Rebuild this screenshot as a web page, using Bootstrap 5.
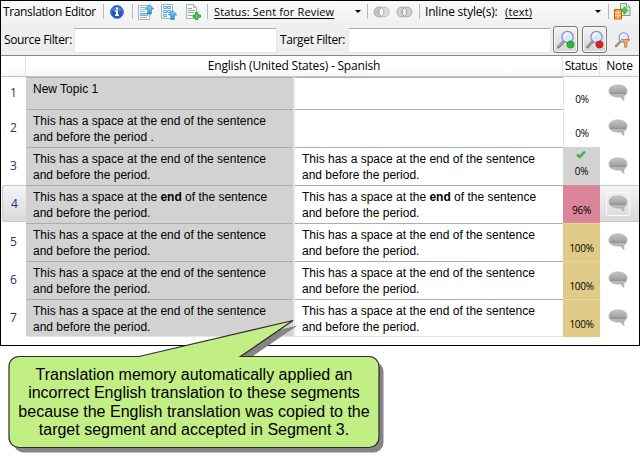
<!DOCTYPE html>
<html lang="en">
<head>
<meta charset="utf-8">
<meta name="viewport" content="width=device-width, initial-scale=1">
<title>Translation Editor</title>
<link rel="stylesheet" href="https://cdn.jsdelivr.net/npm/bootstrap@5.3.0/dist/css/bootstrap.min.css">
<style>
body{width:640px;height:463px;overflow:hidden;background:#fff;color:#000;font:12px/16px "Open Sans","Noto Sans",sans-serif}
svg{display:block;flex:none}
.editor{height:346px;border:1px solid #000}
.tools{height:54px;background:linear-gradient(#fafafa,#eeeeee 55%,#efefef);flex:none}
.bar-a{height:21px;margin-bottom:2px;padding-left:2px;grid-template-columns:100px 7px 22px 6px 23px 25px 21px 7px 141px 12px 6px 23px 23px 6px 80px 90px 13px 6px 20px}
.bar-b{height:31px;padding-left:3px;grid-template-columns:70px 206px 68px 205px 29px 32px 20px}
.ui{letter-spacing:-.36px;white-space:nowrap}
.wide{letter-spacing:-.2px}
.sep{width:1px;height:15px;background:#b9b9b9}
.drop{font-size:11px;letter-spacing:.14px;text-decoration:underline;text-underline-offset:2px;white-space:nowrap;padding-top:1px}
.caret{width:0;height:0;border:3px solid transparent;border-top-color:#000;border-bottom:0}
.field{width:203px;height:25px;margin-top:1px;background:#fff;border:1px solid #e2e6ee;border-top-color:#abadb3}
.tool-btn{width:25px;height:27px;border:1px solid #777;border-radius:3px;background:linear-gradient(#f3f3f3,#d6d6d6);box-shadow:inset 0 0 0 1px #fafafa}
.line{display:grid;grid-template-columns:25px 267px 2px 268px 37px 39px;height:38px}
.line.first{height:32px}
.heads{height:22px;flex:none;border-top:1px solid #8a8590;background:linear-gradient(#fff 60%,#f5f6f8);border-bottom:1px solid #c6c6c8;grid-template-columns:25px 537px 37px 39px}
.heads>div{border-right:1px solid #e0e2e6;padding-top:2px}
.heads>div:last-child{border:0}
.num{color:#1c2f7c;font-size:12px}
.txt{font:12px/16px "Liberation Sans",Arial,sans-serif;padding:3px 0 0 7px;border-top:1px solid #a9adb6;white-space:nowrap}
.line:last-child .txt{border-bottom:1px solid #e2e5ec}
.src{background:#d2d2d2}
.mid{background:#e3e5ef}
.stat{font-size:10px;line-height:12px;letter-spacing:-.3px;padding-top:18px;border-left:1px solid #e2e5ec}
.first .stat{padding-top:16px}
.s-done,.s-fuzzy,.s-full{border-left:0}
.s-done{background:#d3d3d3}.s-fuzzy{background:#dc849a;padding-top:19px}.s-full{background:#dfcb87;border-top:1px solid #e7d7a0;padding-top:18px}
.note{padding-right:3px}
.picked{height:37px;background:linear-gradient(#f4f4f4,#dadada);border-top:1px solid #c8c8c8;border-bottom:1px solid #c8c8c8}
.num.picked{margin-left:1px;border-left:1px solid #c8c8c8;border-radius:3px 0 0 3px}
.note-box{width:24px;height:24px;border:1px solid #f8f8f8;border-radius:2px}
.callout{left:0;top:310px;width:400px;height:153px}
.callout p{font:16px/18.3px "Liberation Sans",Arial,sans-serif;white-space:nowrap;padding:56px 0 0 9px;width:379px;position:relative}
.tick{left:13px;top:3px}
</style>
<script src="https://cdn.jsdelivr.net/npm/bootstrap@5.3.0/dist/js/bootstrap.bundle.min.js"></script>
</head>
<body class="position-relative">
<svg width="0" height="0" class="position-absolute">
 <defs>
  <linearGradient id="bubbleFill" x2="0" y2="1"><stop stop-color="#c6c6c6"/><stop offset=".45" stop-color="#a3a3a3"/><stop offset=".55" stop-color="#949494"/><stop offset=".58" stop-color="#b9b9b9"/><stop offset="1" stop-color="#aaa"/></linearGradient>
  <linearGradient id="up" x2="0" y2="1"><stop stop-color="#83ddfa"/><stop offset="1" stop-color="#3594dc"/></linearGradient>
  <symbol id="bubble" viewBox="0 0 20 18"><path d="M10 1C4.800 1 1 3.300 1 7s3.800 6 9 6h3c.5 1.500 1.500 2.800 3 3.500-.3-1.500-.4-2.800-.2-4C18 11 19 9 19 7c0-3.700-4-6-9-6z" fill="url(#bubbleFill)" stroke="#b8b8b8"/></symbol>
  <symbol id="lens" viewBox="0 0 20 20"><path d="M7.500 11.500 2.500 17" stroke="#8d8580" stroke-width="3" stroke-linecap="round"/><path d="M7 11.500 2.700 16.200" stroke="#c9c2bd" stroke-width="1"/><circle cx="11.500" cy="7" r="5.600" fill="#dce9fc" stroke="#8492d4" stroke-width="1.300"/><path d="M8 7c0-2 2-3.500 4-3" stroke="#fff" stroke-width="1.500" fill="none"/></symbol>
 </defs>
</svg>

<main class="editor d-flex flex-column">
 <div class="tools">
  <div class="bar-a d-grid align-items-center">
   <span class="ui">Translation Editor</span>
   <i class="sep"></i>
   <svg width="14" height="14" viewBox="0 0 14 14"><circle cx="7" cy="7" r="6.500" fill="#2855c5" stroke="#6283ce"/><path d="M2 5c1-4 9-4 10 0-3 2-7 2-10 0z" fill="#7b9ce8" opacity=".6"/><path d="M6 2.500h2v2H6zM5 5.500h3v4h1V11H5V9.500h1V7H5z" fill="#fff"/></svg>
   <i class="sep"></i>
   <svg width="16" height="16" viewBox="0 0 16 16"><path d="M.5 1.500h11v14H.5z" fill="#f6fbf9" stroke="#a5b5b0"/><path d="M2 3.500h6M2 5.500h6M2 7.500h5M2 13.500h7" stroke="#a5bbb7"/><path d="M2.500 9.500h3v2h-3zM6.500 9.500h3v2h-3z" fill="#d9edff" stroke="#62a7ef"/><path d="M11.500.5 15.600 5h-2.300v5h-3.500V5H7.500z" fill="url(#up)" stroke="#257bb5" stroke-width=".7"/></svg>
   <svg width="16" height="16" viewBox="0 0 16 16"><path d="M.5.500h11v14H.5z" fill="#f6fbf9" stroke="#a5b5b0"/><path d="M2.500 2.500h3v2h-3zM6.500 2.500h3v2h-3zM2.500 6.500h3v2h-3zM6.500 6.500h3v2h-3zM2.500 10.500h3v2h-3z" fill="#d9edff" stroke="#62a7ef"/><path d="M11.500 6.500 15.600 11h-2.300v4.500H9.800V11H7.500z" fill="url(#up)" stroke="#257bb5" stroke-width=".7"/></svg>
   <svg width="15" height="16" viewBox="0 0 15 16"><path d="M.5.500h7l3 3v11H.500z" fill="#f6fbf9" stroke="#a5b5b0"/><path d="M7.500.500v3h3" fill="#dfe7e3" stroke="#a5b5b0"/><path d="M2 4.500h4M2 6.500h7M2 8.500h6M2 11.500h4" stroke="#91a69e"/><path d="M9.500 8.500h2.500v2.500h2.500v2.300H12v2.300H9.500v-2.300H7V11h2.500z" fill="#45d64b" stroke="#16942b" stroke-width=".8"/></svg>
   <i class="sep"></i>
   <span class="drop">Status: Sent for Review</span>
   <i class="caret"></i>
   <i class="sep"></i>
   <svg width="17" height="12" viewBox="0 0 17 12"><circle cx="6" cy="6" r="5" fill="#c5c5c5" stroke="#aaa"/><circle cx="11" cy="6" r="5" fill="#dedede" stroke="#bbb"/><path d="M8.500 1.700a5 5 0 0 1 0 8.600 5 5 0 0 1 0-8.600z" fill="#f8f8f8" stroke="#aaa"/></svg>
   <svg width="17" height="12" viewBox="0 0 17 12"><circle cx="6" cy="6" r="5" fill="#d2d2d2" stroke="#aaa"/><circle cx="11" cy="6" r="5" fill="#d2d2d2" stroke="#aaa"/><path d="M8.500 1.700a5 5 0 0 1 0 8.600 5 5 0 0 1 0-8.600z" fill="#eee" stroke="#999"/></svg>
   <i class="sep"></i>
   <span class="ui wide">Inline style(s):</span>
   <span class="drop">(text)</span>
   <i class="caret"></i>
   <i class="sep"></i>
   <svg width="17" height="17" viewBox="0 0 17 17"><path d="M6.500.500h6l3.500 3v9H6.500z" fill="#e2f1e9" stroke="#7d9a91"/><path d="M12.500.500V4H16" fill="#fff" stroke="#7d9a91"/><path d="M6 6h4V3.500L14 7.500l-4 4V9H6z" fill="#48cf4d" stroke="#169b36" stroke-width=".7"/><path d="M.5 6.500h7v9.500h-7z" fill="#ff9a27" stroke="#d45a13"/><path d="M1 9.500h6M1 12.500h6M4 7v9" stroke="#ffe0ae"/></svg>
  </div>
  <div class="bar-b d-grid align-items-center">
   <span class="ui">Source Filter:</span>
   <div class="field"></div>
   <span class="ui">Target Filter:</span>
   <div class="field"></div>
   <div class="tool-btn d-flex align-items-center justify-content-center"><svg width="20" height="20"><use href="#lens"/><circle cx="14.500" cy="14.500" r="3.600" fill="#2dba35" stroke="#168f28" stroke-width=".7"/></svg></div>
   <div class="tool-btn d-flex align-items-center justify-content-center"><svg width="20" height="20"><use href="#lens"/><circle cx="14.500" cy="14.500" r="3.600" fill="#dc2424" stroke="#aa1418" stroke-width=".7"/></svg></div>
   <svg width="17" height="18" viewBox="0 0 20 20"><use href="#lens" width="20" height="20"/><path d="M9 9.500h9.500l-3.500 4v5h-2.500v-5z" fill="#f1ae70" stroke="#c87830"/></svg>
  </div>
 </div>
 <div class="line heads text-center"><div></div><div class="ui wide">English (United States) - Spanish</div><div class="ui">Status</div><div class="ui wide">Note</div></div>
 <div id="rows"></div>
</main>

<div class="callout position-absolute">
 <svg class="position-absolute top-0 start-0" width="400" height="153">
  <defs><path id="balloon" d="M19 46.500H139L293 10.500 240.500 46.500H369a10 10 0 0 1 10 10v71a10 10 0 0 1-10 10H19a10 10 0 0 1-10-10v-71a10 10 0 0 1 10-10z"/></defs>
  <use href="#balloon" x="4.500" y="5" fill="#858585"/>
  <use href="#balloon" fill="#c2ee86" stroke="#2b2b2b" stroke-width="1.200"/>
 </svg>
 <p class="text-center mb-0">Translation memory automatically applied an<br>incorrect English translation to these segments<br>because the English translation was copied to the<br>target segment and accepted in Segment 3.</p>
</div>
<script>
const sentence = 'This has a space at the end of the sentence<br>and before the period.';
const bold = sentence.replace('end', '<b>end</b>');
const tick = '<svg class="tick position-absolute" width="10" height="9"><path d="M1 4.500 3.700 7 9 1.500" fill="none" stroke="#39b54a" stroke-width="2.500"/></svg>';
const data = [
 ['New Topic 1', '', '0%', ''],
 [sentence.replace('period.', 'period .'), '', '0%', ''],
 [sentence, sentence, '0%', 's-done'],
 [bold, bold, '96%', 's-fuzzy'],
 [sentence, sentence, '100%', 's-full'],
 [sentence, sentence, '100%', 's-full'],
 [sentence, sentence, '100%', 's-full']
];
document.getElementById('rows').innerHTML = data.map(([a, b, pct, cls], i) => `
 <div class="line ${i ? '' : 'first'}">
  <div class="num d-flex align-items-center justify-content-center ${i === 3 ? 'picked' : ''}">${i + 1}</div>
  <div class="txt src">${a}</div><div class="mid"></div><div class="txt">${b}</div>
  <div class="stat text-center position-relative ${cls}">${i === 2 ? tick : ''}${pct}</div>
  <div class="note d-flex align-items-center justify-content-center ${i === 3 ? 'picked' : ''}"><div class="${i === 3 ? 'note-box d-flex align-items-center justify-content-center' : ''}"><svg width="20" height="18"><use href="#bubble"/></svg></div></div>
 </div>`).join('');
</script>
</body>
</html>
